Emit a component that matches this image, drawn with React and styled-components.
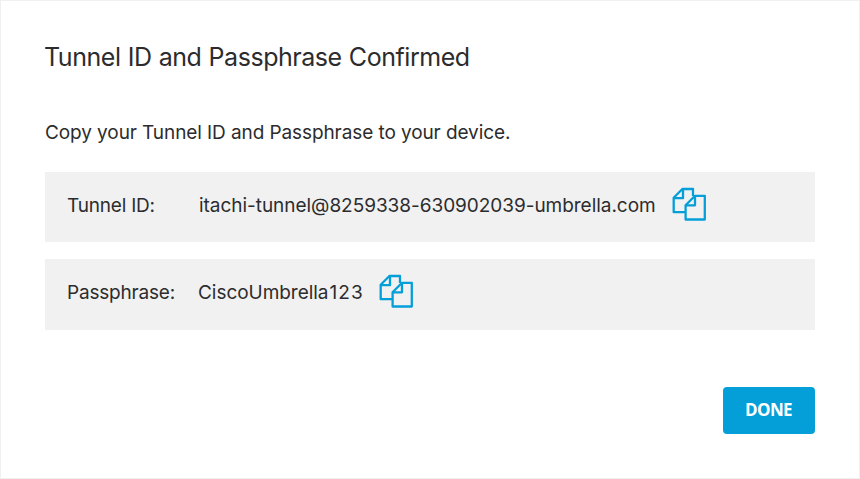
import React from "react";
import styled, { createGlobalStyle } from "styled-components";

const GlobalStyle = createGlobalStyle`
  * { box-sizing: border-box; }
  body { margin: 0; background: #fff; font-family: Inter, "Liberation Sans", sans-serif; color: #2c2c2e; }
`;

const Dialog = styled.main`
  width: 860px;
  height: 479px;
  padding: 40px 44px 44px;
  border: 1px solid #f0f0f0;
  display: flex;
  flex-direction: column;
  background: #fff;
`;

const Title = styled.h1`
  margin: 0 0 0 -1px;
  font-size: 25px;
  font-weight: 400;
  line-height: 32px;
  white-space: nowrap;
  letter-spacing: -0.46px;
  word-spacing: 0.6px;
`;

const Intro = styled.p`
  margin: 46px 0 0;
  font-size: 19px;
  line-height: 28px;
  white-space: nowrap;
  letter-spacing: -0.09px;
`;

const Fields = styled.dl`
  margin: 25px 0 0;
  display: flex;
  flex-direction: column;
  gap: 17px;
`;

const Field = styled.div`
  height: ${(p) => p.$height};
  padding-left: 22px;
  display: flex;
  align-items: flex-start;
  background: #f1f1f1;
`;

const Label = styled.dt`
  width: ${(p) => p.$width};
  padding-top: 20px;
  font-size: 19px;
  line-height: 28px;
  white-space: nowrap;
  letter-spacing: -0.2px;
`;

const Value = styled.dd`
  margin: 0;
  width: ${(p) => p.$width};
  padding-top: 20px;
  font-size: 19px;
  line-height: 28px;
  white-space: nowrap;
  letter-spacing: -0.04px;
`;

const Digits = styled.span`
  margin-left: 1px;
  letter-spacing: 1.1px;
`;

const CopyButton = styled.button`
  margin: 15px 0 0;
  padding: 0;
  border: 0;
  background: none;
  width: 36px;
  height: 36px;
  color: #049fd9;
  svg { display: block; }
`;

const Actions = styled.div`
  margin-top: auto;
  display: flex;
  justify-content: flex-end;
`;

const DoneButton = styled.button`
  width: 92px;
  height: 47px;
  padding: 0 1px 2px 0;
  border: 0;
  border-radius: 4px;
  background: #049fd9;
  color: #fff;
  font: 700 17px/45px "Open Sans", sans-serif;
  letter-spacing: -0.6px;
`;

function CopyIcon() {
  return (
    <svg width="36" height="36" viewBox="0 0 36 36" fill="none" stroke="currentColor" strokeWidth="2.3" strokeLinejoin="round">
      <path d="M13.6 25.2H1.7V10.7L10.4 2H21V9" />
      <path d="M1.7 11.2H11V2" />
      <path d="M13.6 18.2L23 8.8H32.8V32.5H13.6Z" />
      <path d="M13.6 18.3H23V8.8" />
    </svg>
  );
}

export default function App() {
  return (
    <>
      <GlobalStyle />
      <Dialog>
        <Title>Tunnel ID and Passphrase Confirmed</Title>
        <Intro>Copy your Tunnel ID and Passphrase to your device.</Intro>
        <Fields>
          <Field $height="70px">
            <Label $width="132px">Tunnel ID:</Label>
            <Value $width="473px">itachi-tunnel@8259338-630902039-umbrella.com</Value>
            <CopyButton aria-label="Copy tunnel ID"><CopyIcon /></CopyButton>
          </Field>
          <Field $height="71px">
            <Label $width="131px">Passphrase:</Label>
            <Value $width="181px">CiscoUmbrella<Digits>123</Digits></Value>
            <CopyButton aria-label="Copy passphrase"><CopyIcon /></CopyButton>
          </Field>
        </Fields>
        <Actions><DoneButton>DONE</DoneButton></Actions>
      </Dialog>
    </>
  );
}
